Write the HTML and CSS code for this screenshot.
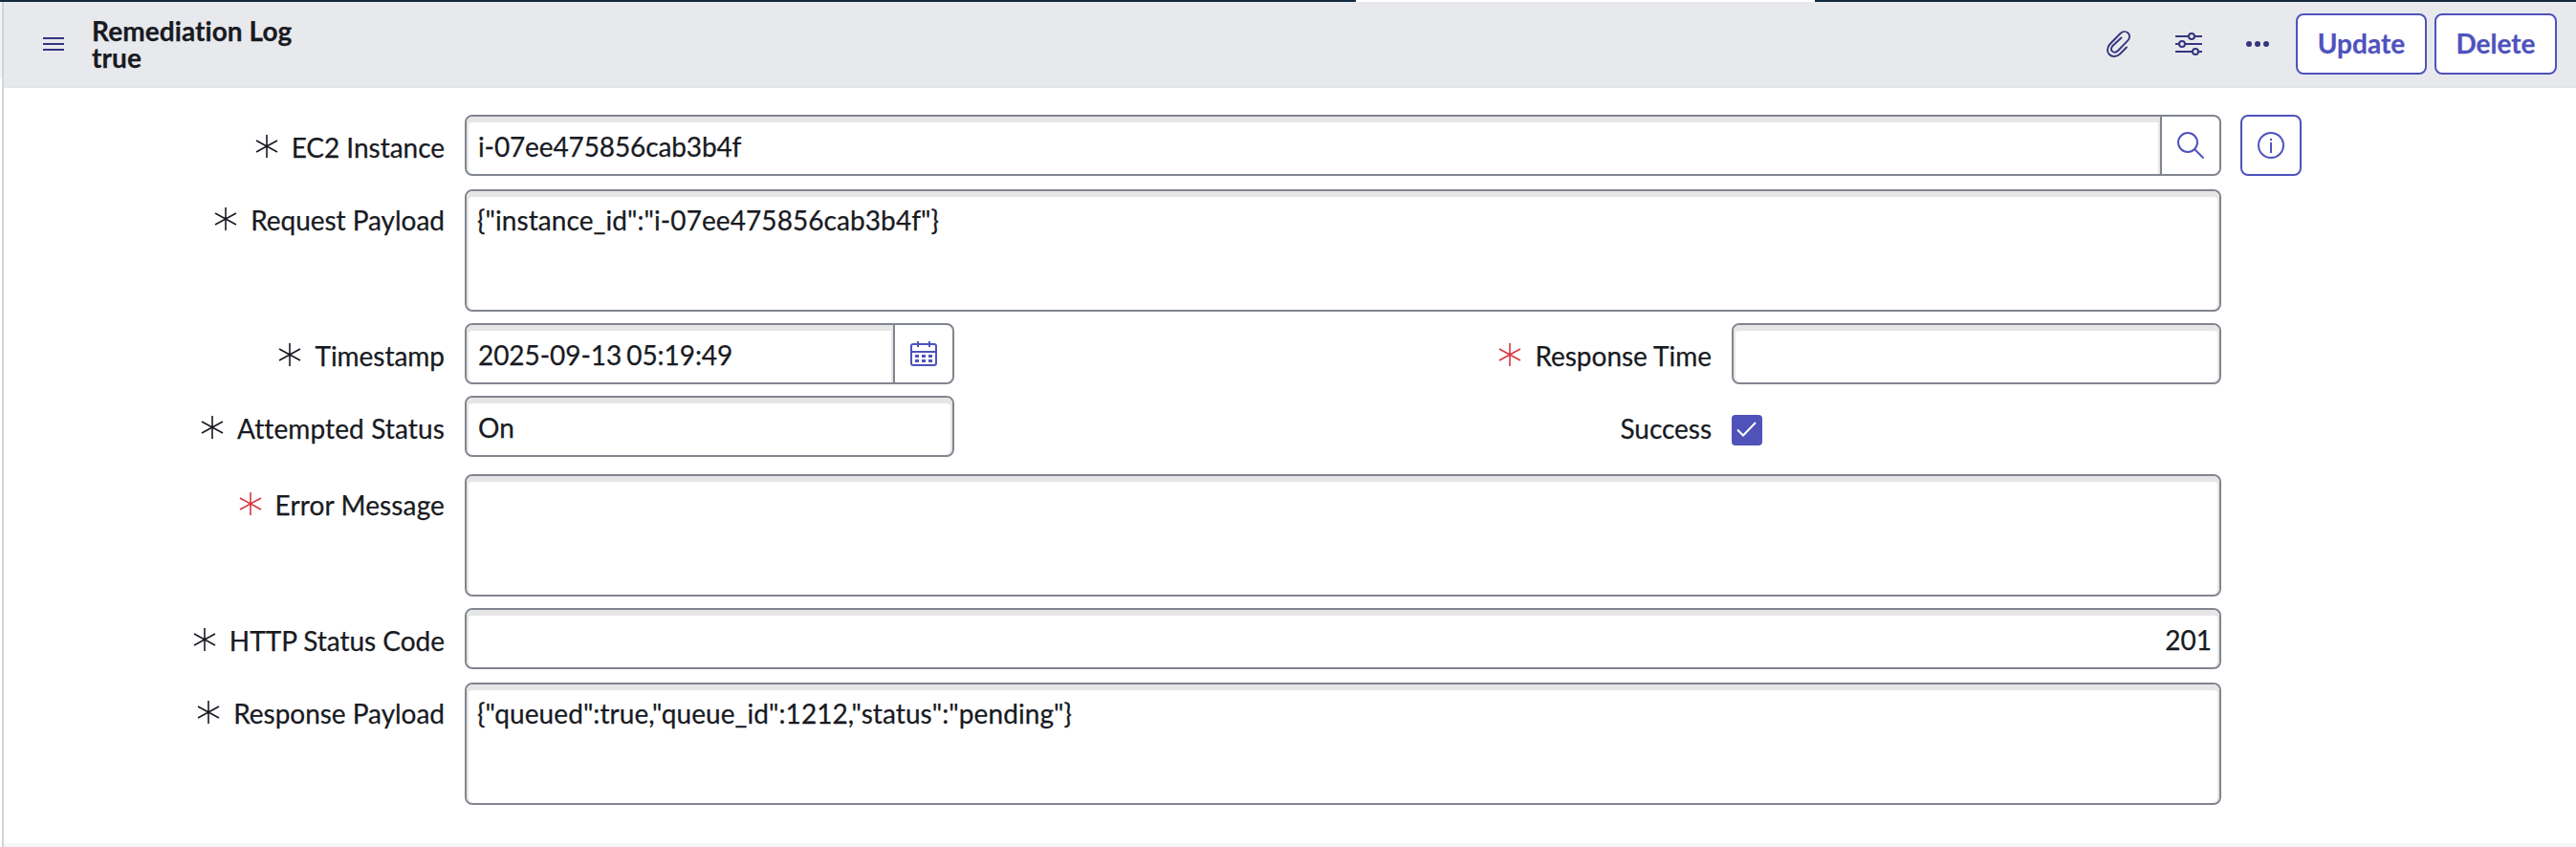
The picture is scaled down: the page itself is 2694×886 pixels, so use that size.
FILE: index.html
```html
<!DOCTYPE html>
<html lang="en">
<head>
<meta charset="utf-8">
<title>Remediation Log</title>
<link rel="stylesheet" href="styles.css">
</head>
<body>
<svg class="defs" width="0" height="0">
  <symbol id="asterisk" viewBox="0 0 24 24"><path d="M12 0v24M1 6l22 12M1 18L23 6" fill="none" stroke="currentColor" stroke-width="1.6"/></symbol>
</svg>
<div class="topbar"><div class="tab"></div></div>
<div class="frame">
  <div class="gutter"></div>
  <main class="panel">
    <header class="header">
      <svg class="menu" width="22" height="14"><path d="M0 1h22M0 7h22M0 13h22" stroke="#34357f" stroke-width="2"/></svg>
      <h1 class="title"><span>Remediation Log</span><span>true</span></h1>
      <div class="tools">
        <svg width="26" height="28" viewBox="0 0 26 28" fill="none" stroke="#34357f" stroke-width="1.900" stroke-linecap="round"><path d="M21 17.500L14 24.500C10.500 27.800 5.700 27.800 3 25S.4 17.500 3.700 14L14.500 3C17 .6 20.300.5 22.500 2.500S24.700 8 22.100 10.600L12 21C10 23 7.500 23 6 21.600S4.600 17.800 6.400 16L15.500 7.500"/></svg>
        <svg width="28" height="24" viewBox="0 0 28 24" fill="none" stroke="#34357f" stroke-width="2"><path d="M0 4h14M20 4h8M0 12h4M10 12h18M0 20h18M24 20h4"/><circle cx="17" cy="4" r="3"/><circle cx="7" cy="12" r="3"/><circle cx="21" cy="20" r="3"/></svg>
        <svg width="24" height="6" fill="#34357f"><circle cx="3" cy="3" r="3"/><circle cx="12" cy="3" r="3"/><circle cx="21" cy="3" r="3"/></svg>
      </div>
      <div class="actions">
        <button class="btn update">Update</button>
        <button class="btn delete">Delete</button>
      </div>
    </header>
    <form class="form">
      <div class="row">
        <label class="label"><svg class="star"><use href="#asterisk"/></svg>EC2 Instance</label>
        <div class="field wide">
          <div class="value joined">i-07ee475856cab3b4f</div>
          <div class="addon"><svg width="28" height="28" viewBox="0 0 28 28" fill="none" stroke="#4f52bd" stroke-width="2"><circle cx="11" cy="11" r="10"/><path d="M18 18l9.500 9.500"/></svg></div>
        </div>
        <div class="info"><svg width="28" height="28" viewBox="0 0 28 28" fill="none" stroke="#4f52bd" stroke-width="2"><circle cx="14" cy="14" r="13"/><path d="M14 7v2M14 11v11"/></svg></div>
      </div>
      <div class="row tall">
        <label class="label"><svg class="star"><use href="#asterisk"/></svg>Request Payload</label>
        <div class="field wide"><div class="value area">{"instance_id":"i-07ee475856cab3b4f"}</div></div>
      </div>
      <div class="row">
        <label class="label"><svg class="star"><use href="#asterisk"/></svg>Timestamp</label>
        <div class="field half">
          <div class="value joined date">2025-09-13 05:19:49</div>
          <div class="addon"><svg width="28" height="26" viewBox="0 0 28 26" fill="none" stroke="#4f52bd" stroke-width="2"><rect x="1" y="3" width="26" height="22" rx="2"/><path d="M1 11h26M8 0v6M20 0v6"/><path d="M5 15.500h4M12 15.500h4M19 15.500h4M5 20.500h4M12 20.500h4M19 20.500h4" stroke-width="3"/></svg></div>
        </div>
        <label class="label second"><svg class="star red"><use href="#asterisk"/></svg>Response Time</label>
        <div class="field half"><div class="value"></div></div>
      </div>
      <div class="row status">
        <label class="label loose"><svg class="star"><use href="#asterisk"/></svg>Attempted Status</label>
        <div class="field half"><div class="value">On</div></div>
        <label class="label second">Success</label>
        <div class="check"><svg width="32" height="32" fill="none" stroke="#fff" stroke-width="2"><path d="M6 15.500l6 6L25 8"/></svg></div>
      </div>
      <div class="row tall">
        <label class="label loose"><svg class="star red"><use href="#asterisk"/></svg>Error Message</label>
        <div class="field wide"><div class="value area"></div></div>
      </div>
      <div class="row code">
        <label class="label"><svg class="star"><use href="#asterisk"/></svg>HTTP Status Code</label>
        <div class="field wide"><div class="value number">201</div></div>
      </div>
      <div class="row tall">
        <label class="label"><svg class="star"><use href="#asterisk"/></svg>Response Payload</label>
        <div class="field wide"><div class="value area">{"queued":true,"queue_id":1212,"status":"pending"}</div></div>
      </div>
    </form>
    <div class="footer"></div>
  </main>
</div>
</body>
</html>
```
FILE: styles.css
```css
* { box-sizing: border-box; }
body {
  margin: 0;
  height: 886px;
  overflow: hidden;
  background: #fff;
  color: #181a22;
  font: 28px/34px Lato, sans-serif;
  font-variant-ligatures: none;
  -webkit-text-stroke: 0.25px;
}
svg { display: block; flex: none; }
.defs { position: absolute; }
.topbar { height: 2px; background: #122b40; }
.tab {
  width: 480px;
  height: 2px;
  margin-left: 1418px;
  background: #fff;
}
.frame { display: flex; height: 884px; }
.gutter {
  width: 4px;
  border-right: 2px solid #d0d6d8;
  background: linear-gradient(#f3f4f5 80px, #fff 80px);
}
.panel { flex: 1; display: flex; flex-direction: column; }
.header {
  display: flex;
  align-items: center;
  height: 90px;
  padding: 0 20px 0 41px;
  background: #e8e9ed;
  border-bottom: 2px solid #e4e5e9;
}
.title {
  display: flex;
  flex-direction: column;
  margin: 0 auto 0 29px;
  font-size: 28px;
  line-height: 28px;
  font-weight: 700;
  letter-spacing: 0.08px;
}
.tools { display: flex; align-items: center; gap: 46px; margin-right: 28px; }
.actions { display: flex; gap: 8px; }
.btn {
  height: 64px;
  padding: 0 0 2px;
  border: 2px solid #4f52bd;
  border-radius: 8px;
  background: #fff;
  color: #4f52bd;
  font: 700 28px/34px Lato, sans-serif;
}
.update { width: 137px; }
.delete { width: 128px; }
.form {
  flex: 1;
  display: flex;
  flex-direction: column;
  gap: 12px;
  padding-top: 28px;
}
.row { display: flex; height: 64px; }
.row.tall { height: 128px; }
.row:first-child { margin-bottom: 2px; }
.status { margin-bottom: 6px; }
.code { margin-bottom: 2px; }
.label {
  display: flex;
  justify-content: flex-end;
  gap: 14px;
  width: 461px;
  margin-right: 21px;
  padding-top: 17px;
  white-space: nowrap;
  letter-spacing: -0.03px;
}
.loose { letter-spacing: 0.12px; }
.tall .label { padding-top: 15px; }
.label.second { width: 792px; }
.star { width: 24px; height: 24px; margin-top: 4px; color: #181a22; }
.red { color: #d8383f; }
.field {
  display: flex;
  border: 2px solid #81858f;
  border-radius: 8px;
  overflow: hidden;
}
.wide { width: 1837px; }
.half { width: 512px; }
.value {
  flex: 1;
  padding: 14px 8px 0 12px;
  border-radius: 6px;
  box-shadow: inset 0 6px #e6e6e6, inset 2px 0 #e6e6e6, inset -2px 0 #e6e6e6;
}
.joined {
  border-radius: 6px 0 0 6px;
  letter-spacing: -0.12px;
}
.date { letter-spacing: -0.06px; word-spacing: -2px; }
.area { padding: 13px 8px 0 11px; letter-spacing: 0.08px; }
.number { text-align: right; }
.addon {
  display: flex;
  align-items: center;
  justify-content: center;
  width: 62px;
  border-left: 2px solid #81858f;
}
.info {
  display: flex;
  align-items: center;
  justify-content: center;
  width: 64px;
  margin-left: 20px;
  border: 2px solid #4f52bd;
  border-radius: 8px;
}
.check {
  width: 32px;
  height: 32px;
  margin-top: 20px;
  border-radius: 4px;
  background: #4f52b8;
}
.footer { height: 4px; background: #f4f5f7; }
```
